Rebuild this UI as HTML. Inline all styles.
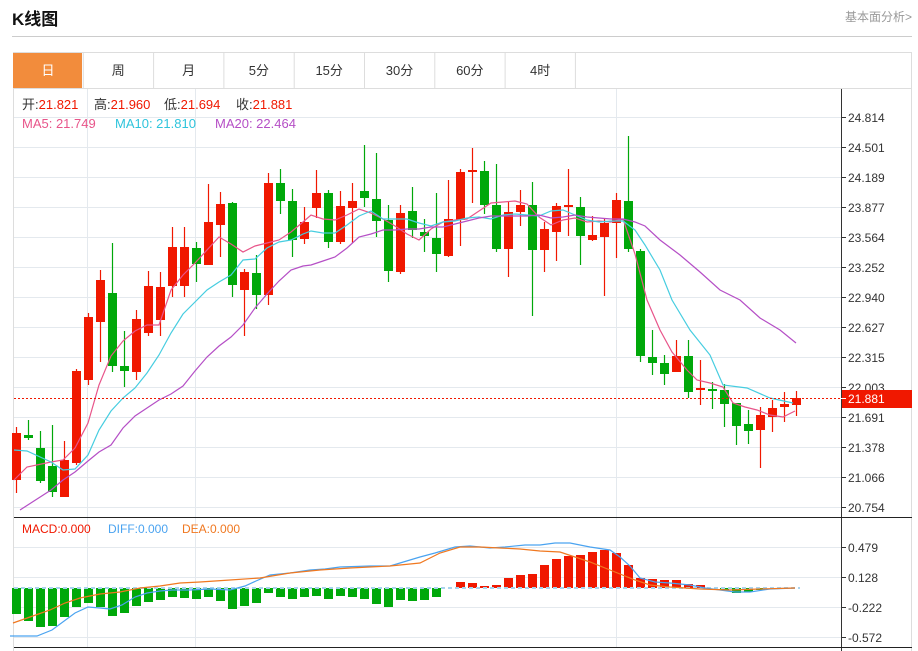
<!DOCTYPE html>
<html><head><meta charset="utf-8"><style>
body{margin:0;width:918px;height:651px;background:#fff;overflow:hidden;font-family:"Liberation Sans","Noto Sans CJK SC",sans-serif;}
#t{position:absolute;left:12px;top:5px;font-size:17px;font-weight:bold;color:#111;}
#r{position:absolute;right:6px;top:8px;font-size:12px;color:#999;}
#hl{position:absolute;left:12px;top:36px;width:900px;height:1px;background:#ccc;}
svg{position:absolute;left:0;top:0}
</style></head><body>
<div id="t">K线图</div><div id="r">基本面分析&gt;</div><div id="hl"></div>
<svg id="s" width="918" height="651" xmlns="http://www.w3.org/2000/svg" font-family="Liberation Sans, Noto Sans CJK SC, sans-serif"></svg>
<script>
var s='';
function L(x1,y1,x2,y2,c,w,d){s+='<line x1="'+x1+'" y1="'+y1+'" x2="'+x2+'" y2="'+y2+'" stroke="'+c+'" stroke-width="'+(w||1)+'"'+(d?' stroke-dasharray="'+d+'"':'')+'/>';}
function R(x,y,w,h,f){s+='<rect x="'+x+'" y="'+y+'" width="'+w+'" height="'+h+'" fill="'+f+'"/>';}
function T(x,y,t,c,sz,a){s+='<text x="'+x+'" y="'+y+'" fill="'+c+'" font-size="'+(sz||13)+'"'+(a?' text-anchor="'+a+'"':'')+'>'+t+'</text>';}
R(13,52,899,36,'#fff');
L(13,52.5,912,52.5,'#ddd');L(13,88.5,912,88.5,'#ddd');L(13.5,52,13.5,651,'#ddd');L(911.5,52,911.5,651,'#ddd');
var tabs=['日','周','月','5分','15分','30分','60分','4时'];
for(var i=0;i<8;i++){var x=13+i*70.3;if(i==0)R(13,53,69,35,'#f28c3c');L(x+70.3,52,x+70.3,88,'#ddd');T(x+35,75,tabs[i],i?'#333':'#fff',13,'middle');}
var lab=['24.814','24.501','24.189','23.877','23.564','23.252','22.940','22.627','22.315','22.003','21.691','21.378','21.066','20.754'];
for(var i=0;i<14;i++){var y=117+i*30;L(14,y+.5,841,y+.5,'#e4e9ee');L(841,y+.5,846,y+.5,'#333');T(848,y+5,lab[i],'#333',12);}
[87.5,195.5,616.5].forEach(function(x){L(x,89,x,647,'#e4e9ee');});
var my=[547,577,607,637],ml=['0.479','0.128','-0.222','-0.572'];
for(var i=0;i<4;i++){L(14,my[i]+.5,841,my[i]+.5,'#e4e9ee');L(841,my[i]+.5,846,my[i]+.5,'#333');T(848,my[i]+5,ml[i],'#333',12);}
L(841.5,89,841.5,651,'#333');L(14,517.5,912,517.5,'#222');L(14,647.5,912,647.5,'#222');
s+='<text y="109" font-size="13"><tspan x="22" fill="#333">开:</tspan><tspan fill="#f01800">21.821</tspan><tspan x="94" fill="#333">高:</tspan><tspan fill="#f01800">21.960</tspan><tspan x="164" fill="#333">低:</tspan><tspan fill="#f01800">21.694</tspan><tspan x="236" fill="#333">收:</tspan><tspan fill="#f01800">21.881</tspan></text>';
s+='<text y="128" font-size="13"><tspan x="22" fill="#e8558a">MA5: 21.749</tspan><tspan x="115" fill="#2fc4dc">MA10: 21.810</tspan><tspan x="215" fill="#b54fc6">MA20: 22.464</tspan></text>';
s+='<text y="533" font-size="12"><tspan x="22" fill="#f01800">MACD:0.000</tspan><tspan x="108" fill="#4aa3f0">DIFF:0.000</tspan><tspan x="182" fill="#f07820">DEA:0.000</tspan></text>';
var C=[['r',433,480,427,493],['g',435,438,420,440],['g',448,481,431,483],['g',466,492,425,497],['r',460,497,441,497],['r',371,463,369,465],['r',317,380,313,385],['r',280,322,270,362],['g',293,366,243,372],['g',366,371,331,387],['r',319,372,310,380],['r',286,333,271,336],['r',287,320,272,336],['r',247,286,227,297],['r',247,286,227,297],['g',248,264,242,282],['r',222,265,184,265],['r',204,225,192,257],['g',203,285,202,297],['r',272,290,269,336],['g',273,295,255,309],['r',183,295,173,305],['g',183,201,169,214],['g',201,240,189,257],['r',222,239,207,244],['r',193,208,170,218],['g',193,242,190,248],['r',206,242,191,244],['r',201,208,183,243],['g',191,198,145,207],['g',199,221,153,237],['g',220,271,205,282],['r',213,272,205,274],['g',211,230,187,238],['g',232,236,219,252],['g',238,254,193,272],['r',219,256,180,257],['r',172,220,169,246],['r',170,172,148,203],['g',171,205,161,214],['g',205,249,164,252],['r',212,249,202,277],['r',205,212,190,226],['g',205,250,182,316],['r',229,250,222,272],['r',206,232,203,261],['r',205,207,169,236],['g',207,236,197,265],['r',235,240,216,241],['r',223,237,219,296],['r',200,223,193,258],['g',201,249,136,252],['g',251,356,249,362],['g',357,363,330,375],['g',363,374,355,385],['r',356,372,340,372],['g',356,392,340,398],['r',388,390,360,405],['g',389,391,382,409],['g',390,404,384,427],['g',403,426,403,445],['g',424,431,410,444],['r',415,430,407,468],['r',408,417,400,432],['r',404,407,392,422],['r',398,405,391,416]];
var RC='#f01800',GC='#00a80a';
var MB=[614,621,627,626,617,607,603,607,616,613,606,602,600,597,598,599,597,601,609,606,603,593,597,599,597,596,599,596,597,599,604,607,600,601,600,597,588,582,583,586,585,578,575,574,565,559,556,555,552,550,553,565,578,579,580,580,584,585,588,590,593,592,590,588,588,588];
for(var i=0;i<66;i++){var x=16.5+12*i,b=MB[i];if(b>588)R(x-4.5,588,9,b-588,GC);else if(b<588)R(x-4.5,b,9,588-b,RC);}
L(14,588,800,588,'#a8d4ee',2,'4,3');
function P(pts,c,w){s+='<polyline fill="none" stroke="'+c+'" stroke-width="'+(w||1.2)+'" points="'+pts+'"/>';}
P('10,636 37,636 52,630 75,613 88,607 100,608 110,609 122,605 135,597 147,593 160,591 172,590 190,590 210,589 230,590 245,586 256,581 270,575 290,573 310,570 325,569 340,567 370,566 390,566 400,563 420,557 435,553 455,547 470,546 490,548 505,547 525,545 540,545 555,543 570,543 590,547 610,550 620,557 630,566 640,578 655,582 670,583 690,585 705,588 720,590 735,592 750,592 770,589 795,588','#4aa3f0');
P('13,623 30,617 50,610 65,603 80,598 100,594 120,592 140,588 160,586 180,583 200,582 230,580 260,578 290,573 320,570 350,568 390,566 420,563 440,553 460,547 480,547 500,548 520,549 540,551 560,552 575,557 590,562 605,568 620,574 635,580 650,585 670,587 700,589 730,590 760,589 795,588','#f07820');
for(var i=0;i<66;i++){var c=C[i],x=16.5+12*i,col=c[0]=='r'?RC:GC;L(x,c[3],x,c[4],col,1.2);R(x-4.5,c[1],9,Math.max(2,c[2]-c[1]),col);}
P('14,480 27,467 51,462 63,460 75,448 88,423 99,385 111,356 123,341 135,331 147,325 159,325 171,290 183,275 195,263 219,237 231,244 243,252 255,246 267,243 279,240 291,232 303,222 311,215 323,219 335,220 347,215 359,209 371,213 383,219 395,226 407,234 419,240 431,229 443,222 455,220 467,219 479,211 491,203 503,202 515,201 527,204 539,217 551,225 563,220 575,218 587,222 599,221 611,222 623,219 635,254 647,300 660,330 672,352 687,370 697,380 710,383 723,387 733,403 745,407 757,410 770,415 783,417 795,411','#e8558a');
P('14,450 27,451 51,462 63,470 75,469 88,455 99,430 111,411 123,398 135,388 147,373 159,355 171,333 183,314 195,302 207,290 219,282 231,275 243,260 255,259 267,248 279,242 291,240 303,234 311,231 323,233 335,233 347,225 359,216 371,211 383,219 395,219 407,219 419,223 431,226 443,222 455,221 467,218 479,217 491,219 503,215 515,214 527,215 539,216 551,211 563,210 575,215 587,220 599,222 611,221 623,221 635,230 645,245 660,270 672,300 690,330 710,355 723,385 747,388 770,398 793,403','#46cde0');
P('20,510 51,490 63,480 75,472 88,461 99,452 111,445 123,428 135,416 147,408 159,400 171,394 183,386 195,371 207,357 219,346 231,337 243,325 255,308 267,294 279,281 291,270 303,266 311,265 323,261 335,257 347,248 359,237 371,234 383,230 395,230 407,229 419,229 431,227 443,227 455,224 467,221 479,218 491,216 503,216 515,216 527,216 539,215 551,218 563,217 575,215 587,217 599,218 611,219 623,219 635,222 645,226 660,240 680,255 700,272 720,290 740,300 760,318 780,330 796,343','#b54fc6');
L(14,398.5,841,398.5,'#f01800',1,'2,2');
R(842,390,70,18,'#f01800');L(841,398.5,846,398.5,'#fff');T(848,403,'21.881','#fff',12);
document.getElementById('s').innerHTML=s;
</script>
</body></html>
